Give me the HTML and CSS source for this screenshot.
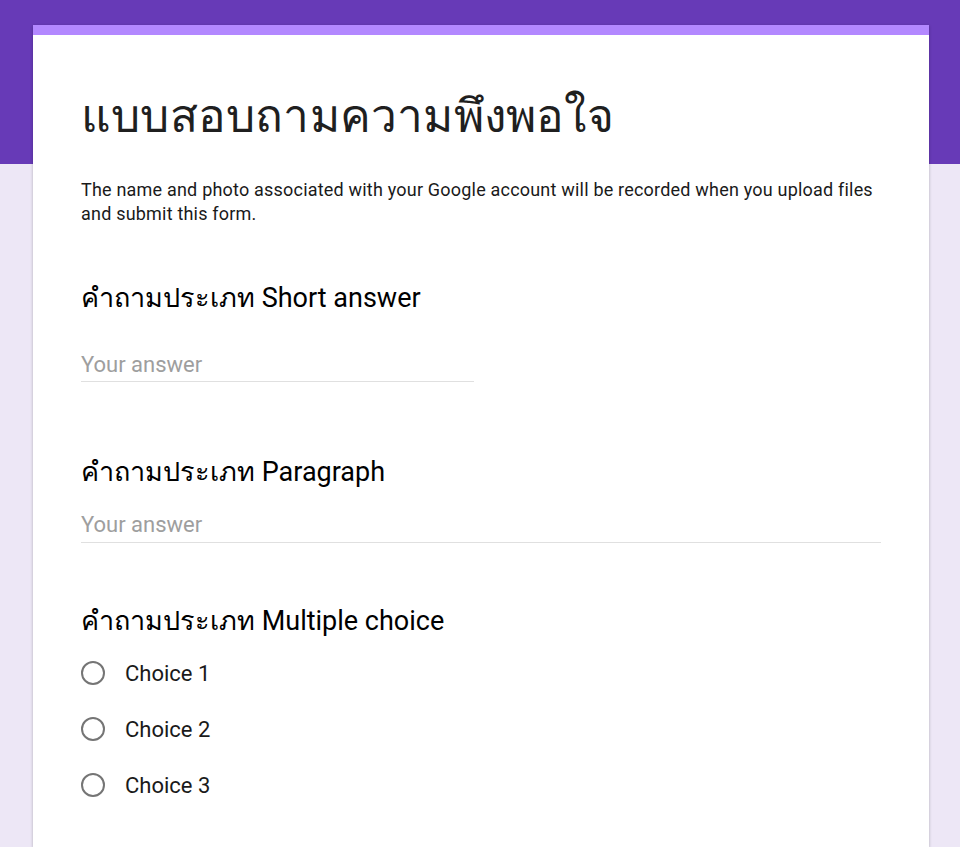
FILE: index.html
```html
<!DOCTYPE html>
<html lang="th">
<head>
<meta charset="utf-8">
<title>แบบสอบถามความพึงพอใจ</title>
<link rel="stylesheet" href="styles.css">
</head>
<body>
<main class="card">
  <h1 class="form-title">แบบสอบถามความพึงพอใจ</h1>
  <p class="form-desc">The name and photo associated with your Google account will be recorded when you upload files and submit this form.</p>

  <section class="question q-short">
    <h2 class="q-title">คำถามประเภท Short answer</h2>
    <div class="answer answer-short">Your answer</div>
  </section>

  <section class="question q-para">
    <h2 class="q-title">คำถามประเภท Paragraph</h2>
    <div class="answer answer-long">Your answer</div>
  </section>

  <section class="question q-choice">
    <h2 class="q-title">คำถามประเภท Multiple choice</h2>
    <ul class="choices">
      <li class="choice"><span class="radio"></span><span class="choice-label">Choice 1</span></li>
      <li class="choice"><span class="radio"></span><span class="choice-label">Choice 2</span></li>
      <li class="choice"><span class="radio"></span><span class="choice-label">Choice 3</span></li>
    </ul>
  </section>
</main>
</body>
</html>
```

FILE: styles.css
```css
html, body {
  margin: 0;
  padding: 0;
}
body {
  height: 847px;
  background: linear-gradient(#673ab7 0, #673ab7 164px, #ede7f6 164px);
  font-family: Roboto, "Noto Sans", "DejaVu Sans", sans-serif;
  color: #212121;
  overflow: hidden;
}
.card {
  box-sizing: border-box;
  width: 896px;
  height: 822px;
  margin: 25px 0 0 33px;
  background: #fff;
  border-top: 10px solid #b388ff;
  box-shadow: 0 1px 3px rgba(0,0,0,0.25);
  padding: 53px 48px 0 48px;
}
.form-title {
  margin: 0;
  font-size: 46px;
  line-height: 56px;
  font-weight: 400;
  letter-spacing: 0.2px;
  color: #1f1f1f;
}
.form-desc {
  margin: 34px 0 0 0;
  font-size: 18px;
  line-height: 24px;
  letter-spacing: 0.2px;
  color: #1a1a1a;
}
.question {
  margin: 0;
}
.q-title {
  margin: 0;
  font-size: 27px;
  line-height: 36px;
  font-weight: 400;
  color: #000;
}
.q-short { margin-top: 54px; }
.q-para { margin-top: 72px; }
.q-choice { margin-top: 60px; }
.answer {
  font-size: 22px;
  line-height: 28px;
  color: #9e9e9e;
  border-bottom: 1px solid #e0e0e0;
}
.answer-short {
  width: 393px;
  margin-top: 35px;
  padding-bottom: 2px;
}
.answer-long {
  margin-top: 21px;
  padding-bottom: 3px;
}
.choices {
  list-style: none;
  margin: 6px 0 0 0;
  padding: 0;
}
.choice {
  display: flex;
  align-items: center;
  height: 56px;
}
.radio {
  box-sizing: border-box;
  width: 24px;
  height: 24px;
  border: 2px solid #757575;
  border-radius: 50%;
  flex: none;
}
.choice-label {
  margin-left: 20px;
  font-size: 22px;
  color: #1a1a1a;
}
```
